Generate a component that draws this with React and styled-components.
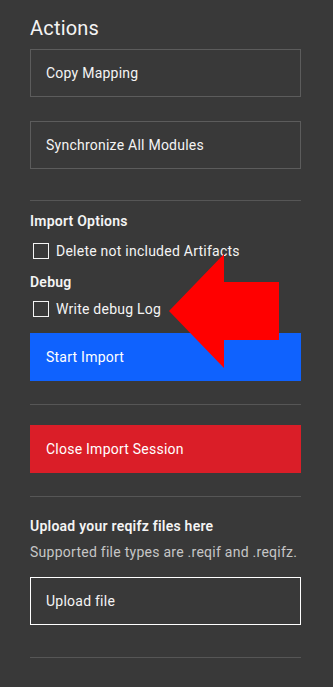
import React from "react";
import styled, { createGlobalStyle } from "styled-components";

const Global = createGlobalStyle`
  html, body { margin: 0; padding: 0; background: #393939; }
  body { font-family: Roboto, "Liberation Sans", Arial, sans-serif; color: #f4f4f4; }
  * { box-sizing: border-box; }
`;

const Panel = styled.div`
  position: relative;
  width: 333px;
  min-height: 687px;
  padding: 14px 32px 0 30px;
  display: flex;
  flex-direction: column;
`;

const Title = styled.h2`
  margin: 0 0 7px;
  font-size: 20px;
  line-height: 28px;
  font-weight: 400;
  letter-spacing: 0.2px;
  color: #f4f4f4;
`;

const Button = styled.button`
  display: flex;
  align-items: center;
  width: 271px;
  height: 48px;
  margin: ${(p) => p.$mt || 0}px 0 0;
  padding: 0 0 0 15px;
  font-family: inherit;
  font-size: 14px;
  letter-spacing: 0.24px;
  text-align: left;
  cursor: pointer;
  border: 1px solid
    ${(p) =>
      p.$kind === "primary"
        ? "#0f62fe"
        : p.$kind === "danger"
        ? "#da1e28"
        : p.$kind === "outline"
        ? "#ffffff"
        : "#5c5c5c"};
  background: ${(p) =>
    p.$kind === "primary" ? "#0f62fe" : p.$kind === "danger" ? "#da1e28" : "transparent"};
  color: ${(p) => (p.$kind === "primary" || p.$kind === "danger" ? "#ffffff" : "#f4f4f4")};
`;

const Divider = styled.hr`
  width: 271px;
  height: 1px;
  margin: ${(p) => p.$mt}px 0 0;
  border: 0;
  background: #565656;
`;

const Heading = styled.div`
  margin-top: ${(p) => p.$mt}px;
  font-size: 14px;
  line-height: 18px;
  font-weight: 600;
  letter-spacing: 0.24px;
  color: #f4f4f4;
`;

const Helper = styled.div`
  margin-top: ${(p) => p.$mt}px;
  font-size: 14px;
  line-height: 18px;
  letter-spacing: 0.26px;
  color: #c6c6c6;
`;

const CheckRow = styled.label`
  display: flex;
  align-items: flex-start;
  gap: 7px;
  margin-top: ${(p) => p.$mt}px;
  height: 20px;
  font-size: 14px;
  line-height: 20px;
  letter-spacing: 0.24px;
  color: #f4f4f4;
`;

const Box = styled.span`
  width: 16px;
  height: 16px;
  margin: 2px 0 0 3px;
  border: 1px solid #f4f4f4;
  flex: none;
`;

const Arrow = styled.svg`
  position: absolute;
  left: 169px;
  top: 254px;
`;

function Check({ mt, children }) {
  return (
    <CheckRow $mt={mt}>
      <Box />
      <span>{children}</span>
    </CheckRow>
  );
}

export default function App() {
  return (
    <>
      <Global />
      <Panel>
        <Title>Actions</Title>
        <Button>Copy Mapping</Button>
        <Button $mt={24}>Synchronize All Modules</Button>
        <Divider $mt={31} />
        <Heading $mt={11}>Import Options</Heading>
        <Check mt={11}>Delete not included Artifacts</Check>
        <Heading $mt={12}>Debug</Heading>
        <Check mt={8}>Write debug Log</Check>
        <Button $kind="primary" $mt={14}>Start Import</Button>
        <Divider $mt={23} />
        <Button $kind="danger" $mt={20}>Close Import Session</Button>
        <Divider $mt={23} />
        <Heading $mt={20}>Upload your reqifz files here</Heading>
        <Helper $mt={8}>Supported file types are .reqif and .reqifz.</Helper>
        <Button $kind="outline" $mt={16}>Upload file</Button>
        <Divider $mt={32} />
        <Arrow width="111" height="115" viewBox="0 0 111 115">
          <polygon points="0,57 55,0 55,28 110,28 110,86 55,86 55,114" fill="#ff0000" />
        </Arrow>
      </Panel>
    </>
  );
}
